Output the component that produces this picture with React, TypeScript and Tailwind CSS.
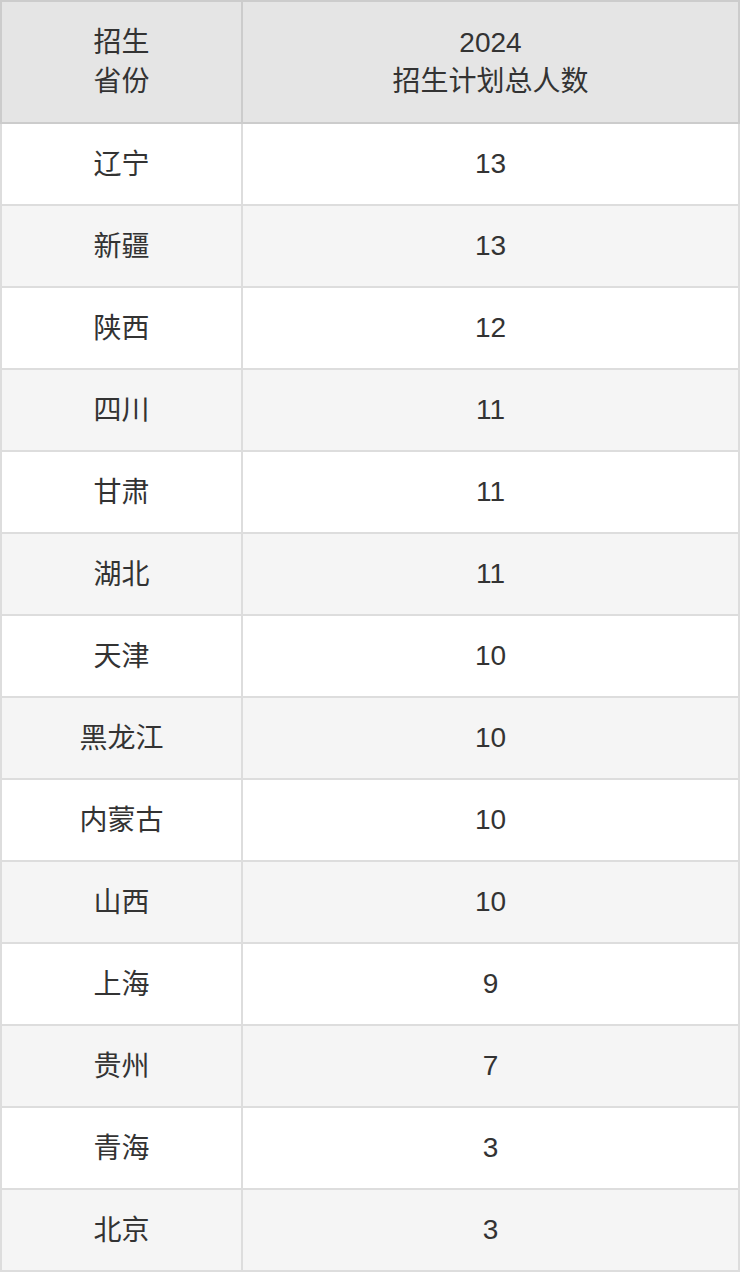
import React from "react";

const rows: [string, string][] = [
  ["辽宁", "13"],
  ["新疆", "13"],
  ["陕西", "12"],
  ["四川", "11"],
  ["甘肃", "11"],
  ["湖北", "11"],
  ["天津", "10"],
  ["黑龙江", "10"],
  ["内蒙古", "10"],
  ["山西", "10"],
  ["上海", "9"],
  ["贵州", "7"],
  ["青海", "3"],
  ["北京", "3"],
];

export default function App() {
  return (
    <div
      className="w-[740px] text-[#333] text-[28px] leading-[39px]"
      style={{ fontFamily: '"Liberation Sans", "Noto Sans CJK SC", sans-serif' }}
    >
      <div className="flex h-[124px] border-2 border-[#ccc] bg-[#e5e5e5]">
        <div className="w-[241px] shrink-0 border-r-2 border-[#ccc] flex flex-col items-center justify-center text-center">
          <div>招生</div>
          <div>省份</div>
        </div>
        <div className="flex-1 flex flex-col items-center justify-center text-center">
          <div>2024</div>
          <div>招生计划总人数</div>
        </div>
      </div>
      {rows.map(([p, n], i) => (
        <div
          key={p}
          className={
            "flex h-[82px] border-x-2 border-b-2 border-[#ddd] " +
            (i % 2 === 0 ? "bg-white" : "bg-[#f5f5f5]")
          }
        >
          <div className="w-[241px] shrink-0 border-r-2 border-[#ddd] flex items-center justify-center">
            {p}
          </div>
          <div className="flex-1 flex items-center justify-center pb-[2px]">{n}</div>
        </div>
      ))}
    </div>
  );
}
